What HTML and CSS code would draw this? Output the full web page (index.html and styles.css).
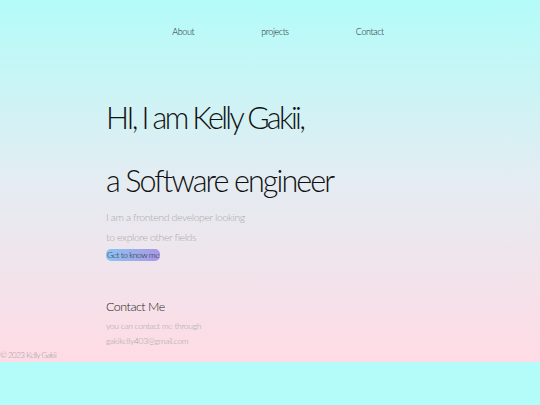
FILE: index.html
```html
<!DOCTYPE html>
<html>
<head>
<meta charset="utf-8">
<link rel="stylesheet" href="styles.css">
</head>
<body>
<div class="page">
  <nav class="nav">
    <a class="nav-link" href="#">About</a>
    <a class="nav-link" href="#">projects</a>
    <a class="nav-link" href="#">Contact</a>
  </nav>
  <main class="main">
    <section class="hero">
      <h1 class="title">HI, I am Kelly Gakii,</h1>
      <h1 class="title second">a Software engineer</h1>
      <p class="lead first">I am a frontend developer looking</p>
      <p class="lead">to explore other fields</p>
      <a class="btn" href="#">Get to know me</a>
    </section>
    <section class="contact">
      <h2 class="contact-title">Contact Me</h2>
      <p class="small">you can contact me through</p>
      <p class="small">gakikelly403@gmail.com</p>
    </section>
  </main>
  <footer class="footer">© 2023 Kelly Gakii</footer>
</div>
</body>
</html>
```
FILE: styles.css
```css
html {
  background: #b3fcf9;
}
body {
  margin: 0;
  font-family: Lato, "Open Sans", sans-serif;
  font-weight: 300;
}
.page {
  background: linear-gradient(to bottom, #b3fcf9 0%, #e4ecf2 50%, #ffdbe5 100%);
  height: 362px;
  display: flex;
  flex-direction: column;
}
.nav {
  display: flex;
  justify-content: center;
  gap: 67px;
  padding-top: 26px;
  padding-left: 16px;
}
.nav-link {
  font-size: 9px;
  letter-spacing: -0.4px;
  color: #222;
  text-decoration: none;
  line-height: 12px;
}
.main {
  padding-left: 106px;
}
.hero {
  padding-top: 59px;
}
.title {
  margin: 0;
  font-size: 30.5px;
  font-weight: 300;
  line-height: 40px;
  color: #111;
  letter-spacing: -2.6px;
}
.second {
  margin-top: 23px;
  letter-spacing: -1.9px;
}
.lead {
  margin: 0;
  font-size: 10.5px;
  letter-spacing: -0.4px;
  line-height: 20px;
  color: #aaa;
}
.lead.first {
  margin-top: 7px;
}
.btn {
  display: block;
  width: fit-content;
  font-size: 8.5px;
  letter-spacing: -0.5px;
  line-height: 12px;
  padding: 0 1px;
  border-radius: 5px;
  color: #222;
  text-decoration: none;
  background: linear-gradient(to right, #8cc4f2, #a898e6);
  margin-top: 2px;
}
.contact {
  padding-top: 37px;
}
.contact-title {
  margin: 0 0 3px;
  font-size: 12.5px;
  letter-spacing: -0.5px;
  font-weight: 300;
  line-height: 18px;
  color: #222;
}
.small {
  margin: 0;
  font-size: 8.5px;
  letter-spacing: -0.3px;
  line-height: 15px;
  color: #a5a5a5;
}
.footer {
  margin-top: 0;
  font-size: 8px;
  letter-spacing: -0.5px;
  color: #999;
  line-height: 12px;
}
```
